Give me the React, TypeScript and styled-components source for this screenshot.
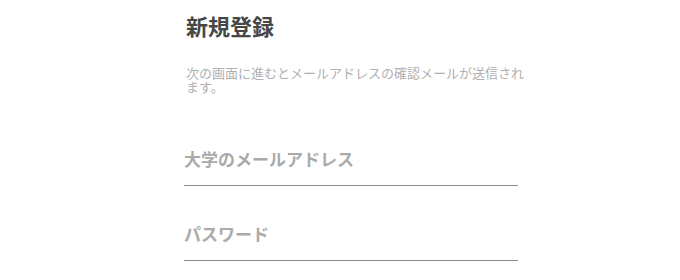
import React from "react";
import styled, { createGlobalStyle } from "styled-components";

const Global = createGlobalStyle`
  html, body { margin: 0; padding: 0; background: #fff; }
  body { font-family: "Noto Sans CJK JP", "Noto Sans", sans-serif; }
`;

const Page = styled.div`
  width: 680px;
  height: 280px;
  padding: 10px 0 0 184px;
  box-sizing: border-box;
`;

const Header = styled.div`
  padding-left: 2px;
  width: 344px;
`;

const Title = styled.h1`
  margin: 0;
  font-size: 22px;
  line-height: 30px;
  font-weight: 700;
  color: #474747;
`;

const Lead = styled.p`
  margin: 26px 0 0;
  font-size: 13px;
  line-height: 14px;
  color: #b0b0b0;
`;

const Form = styled.form`
  display: flex;
  flex-direction: column;
  gap: 24px;
  margin-top: 41px;
  width: 334px;
`;

const Field = styled.input`
  display: block;
  width: 100%;
  box-sizing: border-box;
  height: 51px;
  border: none;
  border-bottom: 1px solid #8c8c8c;
  padding: 0 0 3px;
  font-family: inherit;
  font-size: 17px;
  font-weight: 700;
  color: #444;
  outline: none;
  background: transparent;
  &::placeholder { color: #aaa; }
`;

export default function App() {
  return (
    <>
      <Global />
      <Page>
        <Header>
          <Title>新規登録</Title>
          <Lead>次の画面に進むとメールアドレスの確認メールが送信されます。</Lead>
        </Header>
        <Form>
          <Field type="email" placeholder="大学のメールアドレス" />
          <Field type="password" placeholder="パスワード" />
        </Form>
      </Page>
    </>
  );
}
